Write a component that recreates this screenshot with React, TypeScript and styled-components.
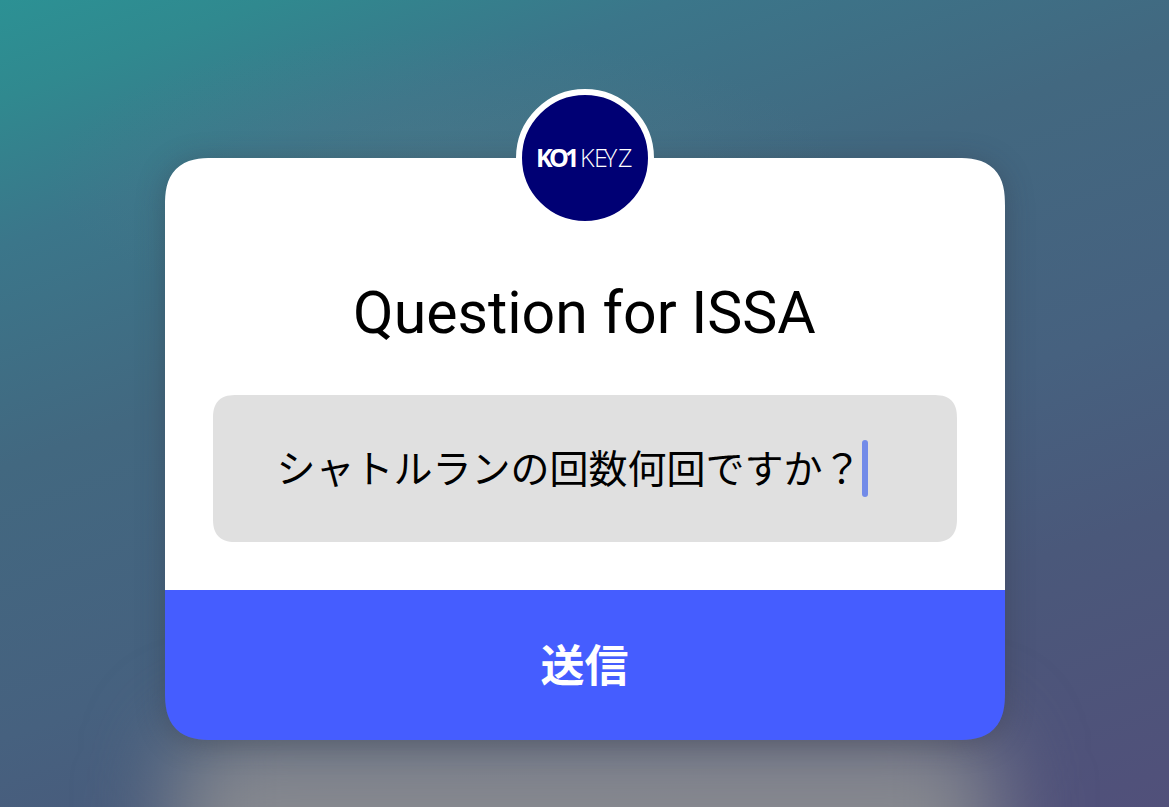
import React, { useState } from "react";
import styled, { createGlobalStyle } from "styled-components";

const GlobalStyle = createGlobalStyle`
  * {
    box-sizing: border-box;
  }
  body {
    margin: 0;
    font-family: Roboto, "Noto Sans CJK JP", sans-serif;
  }
`;

const Page = styled.main`
  position: relative;
  overflow: hidden;
  min-height: 100vh;
  display: flex;
  flex-direction: column;
  align-items: center;
  padding: 158px 24px 64px;
  background:
    radial-gradient(ellipse 34% 18% at 38% 22%, #5b7c8a55 0%, #5b7c8a00 100%),
    linear-gradient(
      160deg,
      #2c9194 0%,
      #30898f 8%,
      #3b768a 20%,
      #426880 38%,
      #46617f 60%,
      #4a587a 76%,
      #51507a 100%
    );
`;

const Glow = styled.div`
  position: absolute;
  bottom: -100px;
  width: 70%;
  height: 176px;
  border-radius: 48px;
  background: #87898f;
  filter: blur(44px);
`;

const Card = styled.form`
  position: relative;
  width: 100%;
  max-width: 840px;
  display: flex;
  flex-direction: column;
  border-radius: 48px;
  corner-shape: superellipse(1.4);
  box-shadow: 0 4px 28px rgba(50, 50, 60, 0.34);
`;

const Avatar = styled.div`
  position: absolute;
  top: 0;
  left: 50%;
  transform: translate(-50%, -50%);
  width: 138px;
  height: 138px;
  border: 6px solid #ffffff;
  border-radius: 50%;
  background: #000074;
  display: flex;
  align-items: center;
  justify-content: center;
`;

const Logo = styled.svg`
  width: 104px;
  height: 32px;
  overflow: visible;
  fill: #ffffff;
  font-family: "Open Sans", sans-serif;
`;

const Body = styled.div`
  display: flex;
  flex-direction: column;
  gap: 46px;
  padding: 119px 48px 48px;
  border-radius: 48px 48px 0 0;
  corner-shape: superellipse(1.4);
  background: #ffffff;
`;

const Title = styled.h1`
  margin: 0;
  font-size: 59px;
  font-weight: 400;
  line-height: 72px;
  text-align: center;
  color: #000000;
`;

const Field = styled.label`
  display: flex;
  align-items: center;
  min-height: 147px;
  padding: 0 64px;
  border-radius: 24px;
  corner-shape: superellipse(1.4);
  background: #e0e0e0;
  cursor: text;
`;

const Answer = styled.input`
  field-sizing: content;
  min-width: 0;
  max-width: 100%;
  padding: 0 0 4px;
  border: 0;
  outline: 0;
  background: transparent;
  font-family: "Noto Sans CJK JP", sans-serif;
  font-size: 39px;
  line-height: 57px;
  color: #000000;
  caret-color: transparent;
`;

const Caret = styled.span`
  flex: none;
  width: 6px;
  height: 57px;
  border-radius: 3px;
  background: #728be8;
`;

const Submit = styled.button`
  height: 150px;
  padding: 0 0 4px;
  border: 0;
  border-radius: 0 0 48px 48px;
  corner-shape: superellipse(1.4);
  background: #455dff;
  color: #ffffff;
  font-family: "Noto Sans CJK JP", sans-serif;
  font-size: 44px;
  font-weight: 700;
  cursor: pointer;
`;

export default function App() {
  const [text, setText] = useState("シャトルランの回数何回ですか？");

  return (
    <>
      <GlobalStyle />
      <Page>
        <Glow />
        <Card onSubmit={(event) => event.preventDefault()}>
          <Avatar>
            <Logo viewBox="0 0 104 32" role="img" aria-label="KO1KEYZ">
              <text x="3 16 32" y="25" fontSize="25" fontWeight="700">KO1</text>
              <text x="47 61 71 85" y="25" fontSize="25" fontWeight="300">KEYZ</text>
            </Logo>
          </Avatar>
          <Body>
            <Title id="question">Question for ISSA</Title>
            <Field>
              <Answer
                type="text"
                aria-labelledby="question"
                value={text}
                onChange={(event) => setText(event.target.value)}
              />
              <Caret aria-hidden="true" />
            </Field>
          </Body>
          <Submit type="submit">送信</Submit>
        </Card>
      </Page>
    </>
  );
}
